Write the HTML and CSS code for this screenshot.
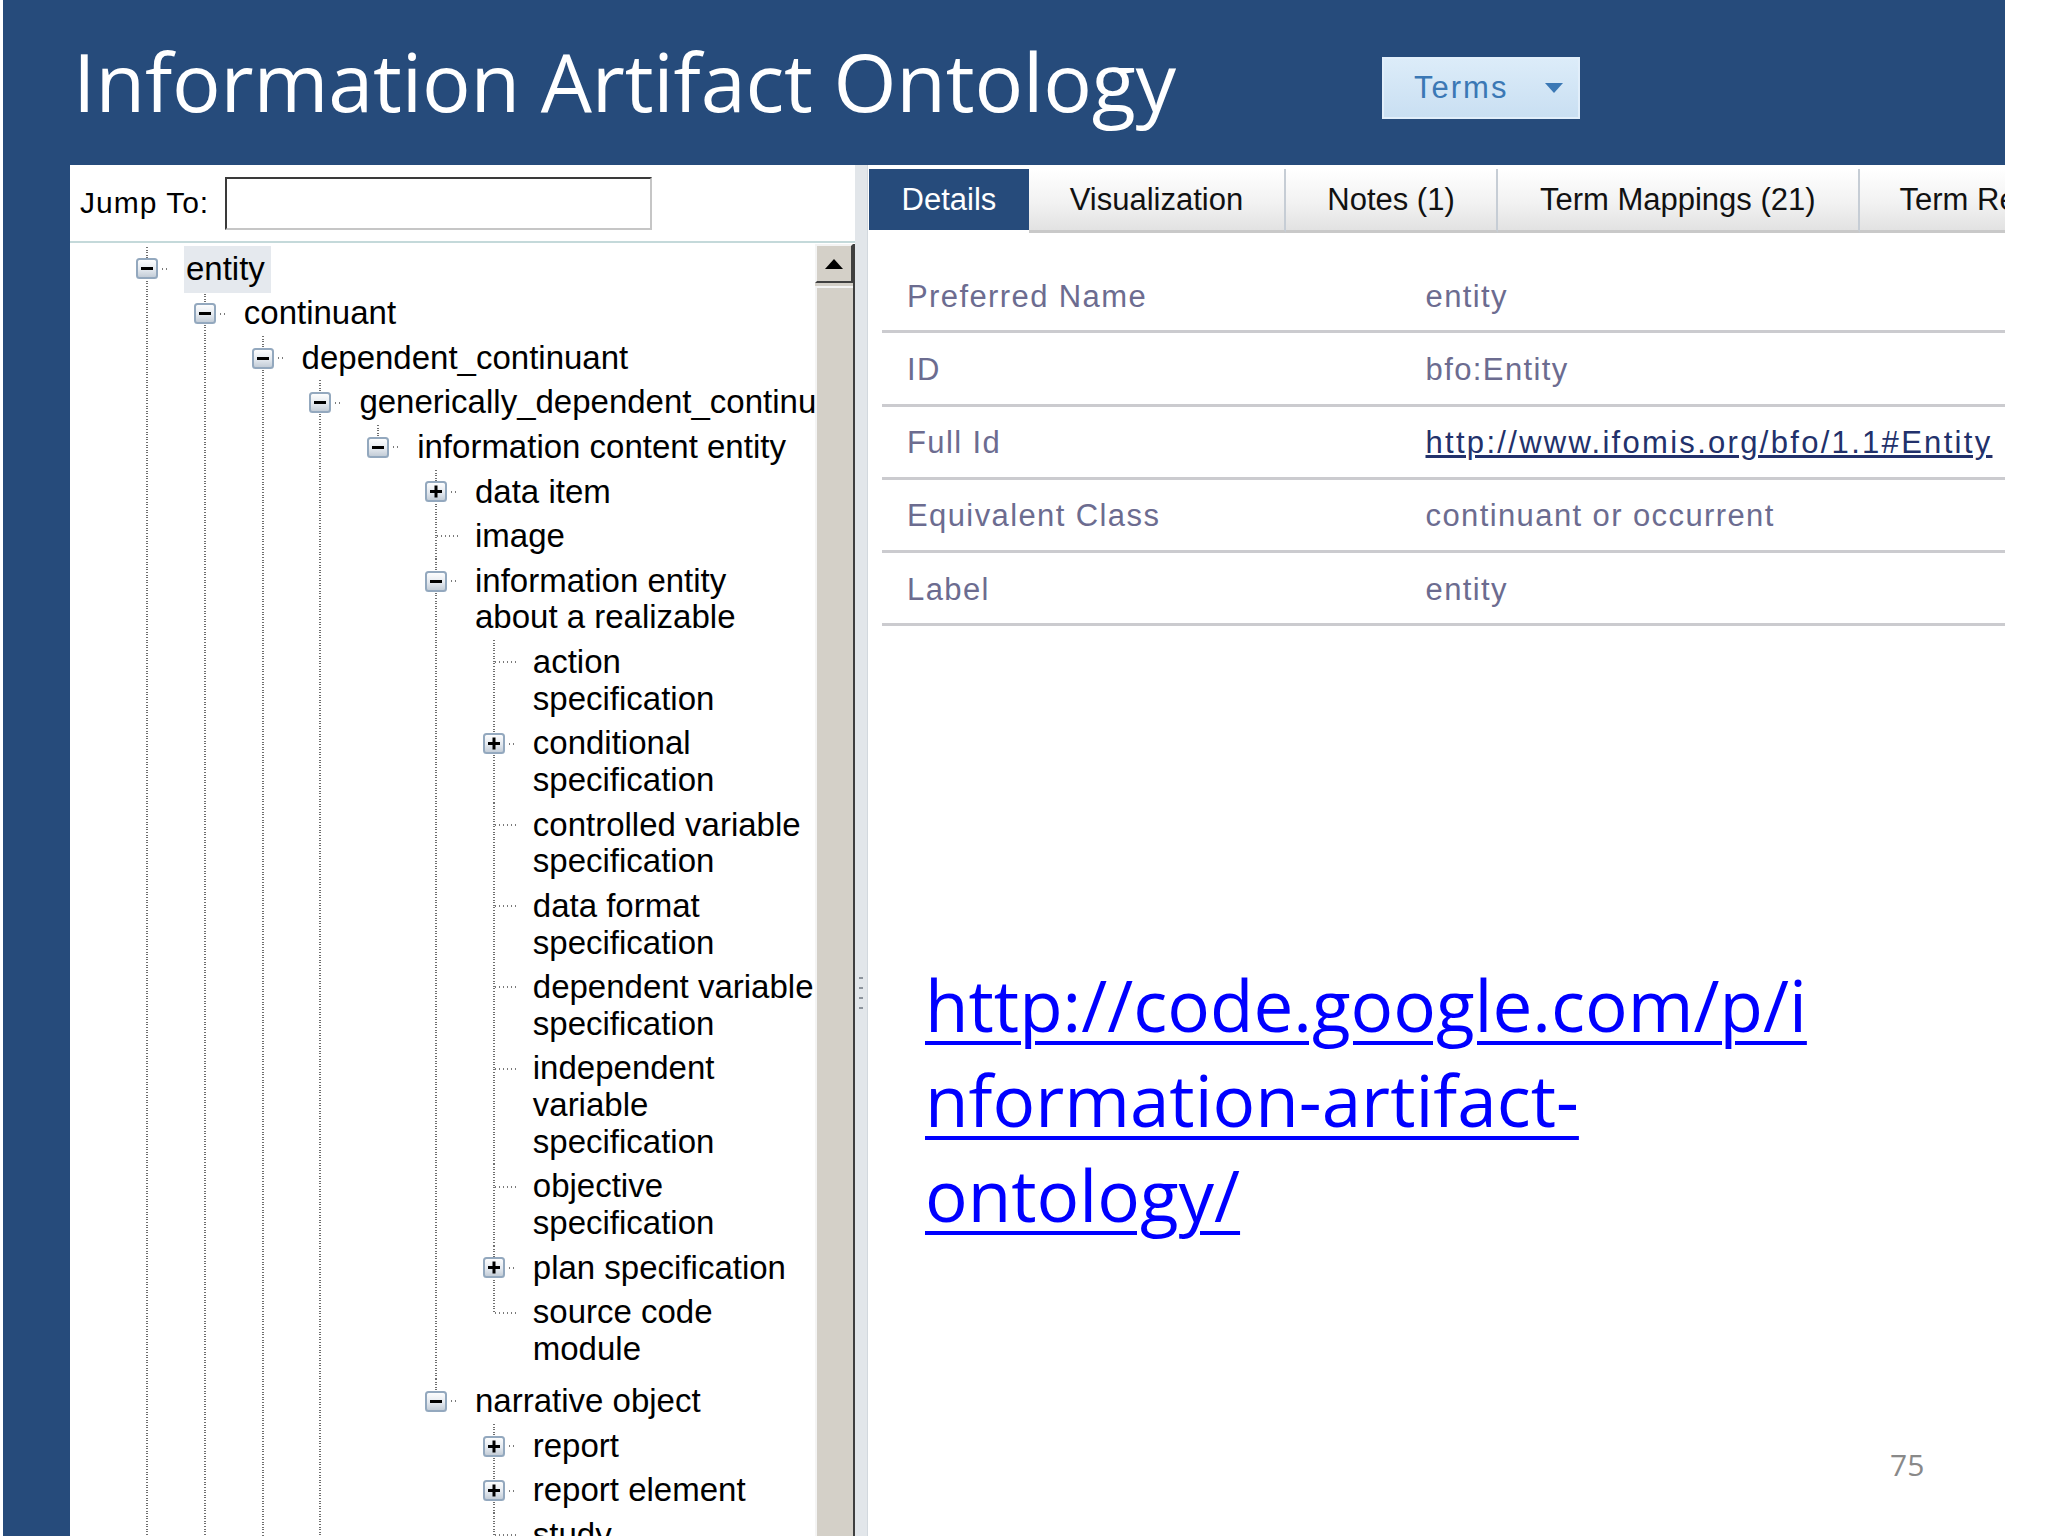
FILE: index.html
```html
<!DOCTYPE html>
<html lang="en">
<head>
<meta charset="utf-8">
<title>Information Artifact Ontology</title>
<link rel="stylesheet" href="styles.css">
</head>
<body>
<svg class="defs" width="0" height="0" aria-hidden="true">
  <defs>
    <linearGradient id="tbg" x1="0" y1="0" x2="0" y2="1">
      <stop offset="0" stop-color="#ffffff"/>
      <stop offset="0.55" stop-color="#e4e9ef"/>
      <stop offset="1" stop-color="#bfc9d4"/>
    </linearGradient>
    <symbol id="i-minus" viewBox="0 0 22 21">
      <rect x="1" y="1" width="20" height="19" rx="2.5" fill="url(#tbg)" stroke="#93a8be" stroke-width="2"/>
      <rect x="5" y="9" width="12" height="3" fill="#000"/>
    </symbol>
    <symbol id="i-plus" viewBox="0 0 22 21">
      <rect x="1" y="1" width="20" height="19" rx="2.5" fill="url(#tbg)" stroke="#93a8be" stroke-width="2"/>
      <rect x="5" y="9" width="12" height="3" fill="#000"/>
      <rect x="9.5" y="4.5" width="3" height="12" fill="#000"/>
    </symbol>
  </defs>
</svg>
<div class="slide">
  <div class="app">
    <header class="header">
      <h1 class="title">Information Artifact Ontology</h1>
      <div class="terms-btn"><span class="terms-text">Terms</span><span class="caret"></span></div>
    </header>
    <div class="main">
      <section class="left">
        <div class="jump">
          <span class="jump-label">Jump To:</span>
          <input class="jump-input" type="text" aria-label="Jump To">
        </div>
        <div class="tree-area">
          <div class="tree">
            <ul class="tree-root">
              <li class="node">
                <div class="row"><span class="tog"><svg class="box"><use href="#i-minus"/></svg><span class="stub"></span></span><span class="label sel">entity</span></div>
                <ul class="kids">
                  <li class="node">
                    <div class="row"><span class="tog"><svg class="box"><use href="#i-minus"/></svg><span class="stub"></span></span><span class="label">continuant</span></div>
                    <ul class="kids">
                      <li class="node">
                        <div class="row"><span class="tog"><svg class="box"><use href="#i-minus"/></svg><span class="stub"></span></span><span class="label">dependent_continuant</span></div>
                        <ul class="kids">
                          <li class="node">
                            <div class="row"><span class="tog"><svg class="box"><use href="#i-minus"/></svg><span class="stub"></span></span><span class="label">generically_dependent_continuant</span></div>
                            <ul class="kids">
                              <li class="node last">
                                <div class="row"><span class="tog"><svg class="box"><use href="#i-minus"/></svg><span class="stub"></span></span><span class="label">information content entity</span></div>
                                <ul class="kids">
                                  <li class="node">
                                    <div class="row"><span class="tog"><svg class="box"><use href="#i-plus"/></svg><span class="stub"></span></span><span class="label">data item</span></div>
                                  </li>
                                  <li class="node">
                                    <div class="row"><span class="tog leaf"><span class="stub"></span></span><span class="label">image</span></div>
                                  </li>
                                  <li class="node">
                                    <div class="row"><span class="tog"><svg class="box"><use href="#i-minus"/></svg><span class="stub"></span></span><span class="label">information entity<br>about a realizable</span></div>
                                    <ul class="kids group-end">
                                      <li class="node"><div class="row"><span class="tog leaf"><span class="stub"></span></span><span class="label">action<br>specification</span></div></li>
                                      <li class="node"><div class="row"><span class="tog"><svg class="box"><use href="#i-plus"/></svg><span class="stub"></span></span><span class="label">conditional<br>specification</span></div></li>
                                      <li class="node"><div class="row"><span class="tog leaf"><span class="stub"></span></span><span class="label">controlled variable<br>specification</span></div></li>
                                      <li class="node"><div class="row"><span class="tog leaf"><span class="stub"></span></span><span class="label">data format<br>specification</span></div></li>
                                      <li class="node"><div class="row"><span class="tog leaf"><span class="stub"></span></span><span class="label">dependent variable<br>specification</span></div></li>
                                      <li class="node"><div class="row"><span class="tog leaf"><span class="stub"></span></span><span class="label">independent<br>variable<br>specification</span></div></li>
                                      <li class="node"><div class="row"><span class="tog leaf"><span class="stub"></span></span><span class="label">objective<br>specification</span></div></li>
                                      <li class="node"><div class="row"><span class="tog"><svg class="box"><use href="#i-plus"/></svg><span class="stub"></span></span><span class="label">plan specification</span></div></li>
                                      <li class="node last"><div class="row"><span class="tog leaf"><span class="stub"></span></span><span class="label">source code<br>module</span></div></li>
                                    </ul>
                                  </li>
                                  <li class="node last">
                                    <div class="row"><span class="tog"><svg class="box"><use href="#i-minus"/></svg><span class="stub"></span></span><span class="label">narrative object</span></div>
                                    <ul class="kids">
                                      <li class="node"><div class="row"><span class="tog"><svg class="box"><use href="#i-plus"/></svg><span class="stub"></span></span><span class="label">report</span></div></li>
                                      <li class="node"><div class="row"><span class="tog"><svg class="box"><use href="#i-plus"/></svg><span class="stub"></span></span><span class="label">report element</span></div></li>
                                      <li class="node"><div class="row"><span class="tog leaf"><span class="stub"></span></span><span class="label">study</span></div></li>
                                    </ul>
                                  </li>
                                </ul>
                              </li>
                            </ul>
                          </li>
                        </ul>
                      </li>
                    </ul>
                  </li>
                </ul>
              </li>
            </ul>
          </div>
          <div class="vscroll">
            <div class="sb-btn"><span class="sb-arrow"></span></div>
            <div class="sb-thumb"></div>
          </div>
        </div>
      </section>
      <div class="splitter"><div class="grip"></div></div>
      <section class="right">
        <nav class="tabs">
          <div class="tab active t-details">Details</div>
          <div class="tab t-vis">Visualization</div>
          <div class="tab t-notes">Notes (1)</div>
          <div class="tab t-map">Term Mappings (21)</div>
          <div class="tab t-rel">Term Relationships</div>
        </nav>
        <div class="details">
          <div class="drow"><span class="dlabel">Preferred Name</span><span class="dval">entity</span></div>
          <div class="drow"><span class="dlabel">ID</span><span class="dval">bfo:Entity</span></div>
          <div class="drow"><span class="dlabel">Full Id</span><span class="dval"><a class="durl" href="http://www.ifomis.org/bfo/1.1#Entity">http://www.ifomis.org/bfo/1.1#Entity</a></span></div>
          <div class="drow"><span class="dlabel">Equivalent Class</span><span class="dval">continuant or occurrent</span></div>
          <div class="drow"><span class="dlabel">Label</span><span class="dval">entity</span></div>
        </div>
      </section>
    </div>
  </div>
  <a class="big-link" href="http://code.google.com/p/information-artifact-ontology/">http://code.google.com/p/i<br>nformation-artifact-<br>ontology/</a>
  <div class="page-num">75</div>
</div>
</body>
</html>
```
FILE: styles.css
```css
html, body {
  margin: 0;
  padding: 0;
  background: #ffffff;
}

.defs {
  display: block;
  width: 0;
  height: 0;
  overflow: hidden;
}

.slide {
  position: relative;
  width: 2048px;
  height: 1536px;
  overflow: hidden;
  background: #ffffff;
  font-family: "Liberation Sans", Arial, sans-serif;
}

.app {
  margin-left: 3px;
  width: 2002px;
  height: 1536px;
  display: flex;
  flex-direction: column;
  background: #264b7b;
}

/* ---------- header ---------- */
.header {
  height: 165px;
  flex: none;
  display: flex;
  align-items: flex-start;
  padding-left: 70px;
}

.title {
  margin: 40px 0 0 0;
  width: 1309px;
  flex: none;
  font-family: "Open Sans", "Liberation Sans", sans-serif;
  font-weight: 400;
  font-size: 81px;
  line-height: 81px;
  letter-spacing: -0.2px;
  color: #ffffff;
  white-space: nowrap;
}

.terms-btn {
  margin-top: 57px;
  width: 198px;
  height: 62px;
  box-sizing: border-box;
  border: 2px solid #e1eefa;
  background: linear-gradient(#dcecf9, #c9dff2);
  display: flex;
  align-items: center;
  padding-left: 30px;
}

.terms-text {
  font-size: 31px;
  letter-spacing: 2px;
  color: #3b78b5;
}

.caret {
  margin-left: auto;
  margin-right: 15px;
  width: 0;
  height: 0;
  border-left: 9px solid transparent;
  border-right: 9px solid transparent;
  border-top: 10px solid #3b78b5;
}

/* ---------- main ---------- */
.main {
  flex: 1;
  min-height: 0;
  display: flex;
  padding-left: 67px;
}

.left {
  width: 785px;
  flex: none;
  display: flex;
  flex-direction: column;
  background: #ffffff;
}

.jump {
  height: 78px;
  flex: none;
  box-sizing: border-box;
  border-bottom: 2px solid #c4d9da;
  display: flex;
  align-items: center;
  padding-left: 10px;
}

.jump-label {
  width: 145px;
  flex: none;
  font-size: 30px;
  letter-spacing: 1px;
  color: #000000;
}

.jump-input {
  width: 427px;
  height: 53px;
  box-sizing: border-box;
  margin: 0;
  padding: 0 6px;
  border-style: solid;
  border-width: 2px;
  border-color: #3a3a3a #c6c6c6 #c6c6c6 #3a3a3a;
  background: #ffffff;
  font-size: 28px;
  font-family: "Liberation Sans", Arial, sans-serif;
}

.tree-area {
  flex: 1;
  min-height: 0;
  display: flex;
}

.tree {
  flex: 1;
  min-width: 0;
  overflow: hidden;
  padding-left: 66px;
  padding-top: 3.7px;
}

.tree ul {
  list-style: none;
  margin: 0;
  padding: 0;
}

.tree .kids {
  margin-left: 57.8px;
}

.tree .kids.group-end {
  padding-bottom: 7.6px;
}

.node {
  background-image: repeating-linear-gradient(to bottom, #6f6f6f 0, #6f6f6f 1px, transparent 1px, transparent 2.6px);
  background-repeat: no-repeat;
  background-position: 10px 0;
  background-size: 2px 100%;
}

.node.last {
  background-size: 2px 22.3px;
}

.row {
  display: flex;
  align-items: flex-start;
  padding: 3.95px 0;
  font-size: 33px;
  line-height: 36.7px;
  color: #000000;
  white-space: nowrap;
}

.tog {
  width: 50px;
  height: 36.7px;
  flex: none;
  display: flex;
  align-items: center;
}

.box {
  width: 22px;
  height: 21px;
  flex: none;
  display: block;
}

.stub {
  height: 2px;
  width: 8px;
  margin-left: 4px;
  background-image: repeating-linear-gradient(to right, #7a7a7a 0, #7a7a7a 1.5px, transparent 1.5px, transparent 4px);
}

.tog.leaf .stub {
  margin-left: 12px;
  width: 22px;
}

.label {
  display: block;
}

.label.sel {
  background: #e5e9ee;
  margin: -4.6px 0 -5.6px -2px;
  padding: 4.6px 6px 5.6px 2px;
}

/* scrollbar */
.vscroll {
  width: 38px;
  flex: none;
  margin-top: 1px;
  border-right: 2px solid #3f3f3f;
  display: flex;
  flex-direction: column;
  background: #d4d0c8;
}

.sb-btn {
  height: 39px;
  flex: none;
  box-sizing: border-box;
  background: #d4d0c8;
  border-style: solid;
  border-width: 2px;
  border-color: #f4f4f4 #404040 #404040 #f4f4f4;
  display: flex;
  align-items: center;
  justify-content: center;
}

.sb-arrow {
  width: 0;
  height: 0;
  border-left: 9px solid transparent;
  border-right: 9px solid transparent;
  border-bottom: 10px solid #000000;
}

.sb-thumb {
  flex: 1;
  margin-top: 3px;
  box-sizing: border-box;
  background: #d4d0c8;
  border-top: 2px solid #f4f4f4;
  border-left: 2px solid #f4f4f4;
}

/* splitter */
.splitter {
  width: 12px;
  flex: none;
  background: #e2e6ea;
}

.grip {
  margin: 812px auto 0 auto;
  width: 4px;
  height: 38px;
  background-image: repeating-linear-gradient(to bottom, #8c939c 0, #8c939c 2px, transparent 2px, transparent 10px);
}

/* right panel */
.right {
  flex: 1;
  min-width: 0;
  overflow: hidden;
  background: #ffffff;
  border-left: 1px solid #d2d8de;
  padding: 4px 0 0 1px;
}

.tabs {
  display: flex;
  height: 64px;
  align-items: flex-start;
}

.tab {
  flex: none;
  box-sizing: border-box;
  height: 64px;
  display: flex;
  align-items: center;
  justify-content: center;
  font-size: 31px;
  white-space: nowrap;
  color: #111111;
  background: linear-gradient(#ffffff, #f2f2f2 55%, #e2e2e2);
  border-bottom: 3px solid #c9c9c9;
  border-right: 2px solid #c6cdd5;
}

.tab.active {
  height: 61px;
  background: #264b7b;
  color: #ffffff;
  border: 0;
}

.t-details { width: 160px; }
.t-vis { width: 257px; }
.t-notes { width: 212px; }
.t-map { width: 361.5px; }
.t-rel { width: 320px; justify-content: flex-start; padding-left: 40px; }

.details {
  margin: 27px 0 0 12.5px;
}

.drow {
  display: grid;
  grid-template-columns: 544px 1fr;
  align-items: center;
  height: 73.25px;
  box-sizing: border-box;
  border-bottom: 3px solid #cbcbcf;
  padding-top: 3px;
  font-size: 31px;
  letter-spacing: 1.4px;
  color: #6c6c90;
  white-space: nowrap;
}

.dlabel {
  padding-left: 25.5px;
}

.durl {
  color: #22316b;
  text-decoration: underline;
  letter-spacing: 2.3px;
}

/* slide overlays */
.big-link {
  position: absolute;
  left: 925px;
  top: 957px;
  font-family: "Open Sans", "Liberation Sans", sans-serif;
  font-size: 71px;
  line-height: 95px;
  color: #0000ff;
  white-space: nowrap;
  text-decoration: underline;
  text-decoration-thickness: 4px;
  text-underline-offset: 9px;
}

.page-num {
  position: absolute;
  left: 1890px;
  top: 1450px;
  font-family: "Open Sans", "Liberation Sans", sans-serif;
  font-size: 30px;
  line-height: 30px;
  color: #898989;
}
```
